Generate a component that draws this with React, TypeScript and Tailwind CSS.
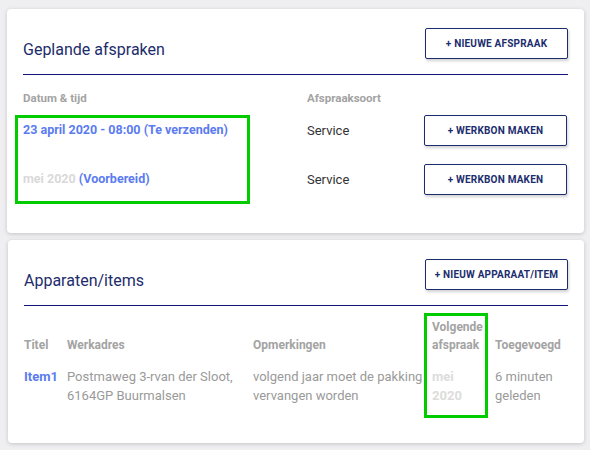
import React from 'react'

// ─── Data ─────────────────────────────────────────────────────────────────────

const APPOINTMENTS = [
  { date: '23 april 2020 - 08:00', dateMuted: false, status: '(Te verzenden)', type: 'Service' },
  { date: 'mei 2020', dateMuted: true, status: '(Voorbereid)', type: 'Service' },
]

// ─── Bits ─────────────────────────────────────────────────────────────────────

function OutlineButton({ label }: { label: string }) {
  return (
    <button className="w-[143px] h-[31px] border-[1.5px] border-[#1c2d6e] bg-white rounded-[2px] shadow-[1px_2px_3px_rgba(0,0,0,0.18)] text-[10px] font-bold tracking-[0.2px] text-[#1c2d6e] uppercase">
      {label}
    </button>
  )
}

function CardHeader({ title, action }: { title: string; action: string }) {
  return (
    <div className="flex items-end justify-between pt-[19px] pb-[15px] border-b border-[#13137a]">
      <h2 className="text-[16px] leading-[20px] text-[#1d2c6b] -mb-[1px]">{title}</h2>
      <OutlineButton label={action} />
    </div>
  )
}

// ─── App ──────────────────────────────────────────────────────────────────────

export default function App() {
  return (
    <div
      className="relative w-[590px] h-[450px] bg-[#efeef1] pt-[9px] pl-[7px]"
      style={{ fontFamily: 'Roboto, "Liberation Sans", sans-serif' }}
    >
      {/* Geplande afspraken */}
      <div className="w-[577px] h-[224px] bg-white rounded-[4px] shadow-[0_1px_4px_rgba(0,0,0,0.18)] px-4">
        <CardHeader title="Geplande afspraken" action="+ Nieuwe afspraak" />
        <div className="grid grid-cols-[284px_117px_143px] items-center">
          <div className="pt-[15px] pb-[8px] text-[11.5px] font-bold text-[#a3a3a3]">Datum &amp; tijd</div>
          <div className="pt-[15px] pb-[8px] text-[11.5px] font-bold text-[#a3a3a3]">Afspraaksoort</div>
          <div />
          {APPOINTMENTS.map((a, i) => (
            <React.Fragment key={i}>
              <div className={`text-[12.5px] font-bold ${i > 0 ? 'mt-[18px]' : ''}`}>
                <span className={a.dateMuted ? 'text-[#d9d9d9]' : 'text-[#5b7bf0]'}>{a.date}</span>{' '}
                <span className="text-[#5b7bf0]">{a.status}</span>
              </div>
              <div className={`text-[13px] text-[#333333] ${i > 0 ? 'mt-[18px]' : ''}`}>{a.type}</div>
              <div className={i > 0 ? 'mt-[18px]' : ''}>
                <OutlineButton label="+ Werkbon maken" />
              </div>
            </React.Fragment>
          ))}
        </div>
      </div>

      {/* Apparaten/items */}
      <div className="mt-[7px] ml-[1px] w-[576px] h-[203px] bg-white rounded-[4px] shadow-[0_1px_4px_rgba(0,0,0,0.18)] px-4">
        <CardHeader title="Apparaten/items" action="+ Nieuw apparaat/item" />
        <div className="grid grid-cols-[43px_186px_179px_63px_73px] items-end text-[12px] leading-[18px] font-bold text-[#a3a3a3] pt-[12px]">
          <div>Titel</div>
          <div>Werkadres</div>
          <div>Opmerkingen</div>
          <div>
            Volgende
            <br />
            afspraak
          </div>
          <div>Toegevoegd</div>
        </div>
        <div className="grid grid-cols-[43px_186px_179px_63px_73px] items-start text-[13px] leading-[19px] text-[#9a9a9a] pt-[13px]">
          <div className="font-bold text-[#5b7bf0]">Item1</div>
          <div>
            Postmaweg 3-rvan der Sloot,
            <br />
            6164GP Buurmalsen
          </div>
          <div>
            volgend jaar moet de pakking
            <br />
            vervangen worden
          </div>
          <div className="font-bold text-[#dcdcdc]">
            mei
            <br />
            2020
          </div>
          <div>
            6 minuten
            <br />
            geleden
          </div>
        </div>
      </div>

      {/* Annotation boxes */}
      <div className="absolute left-[15px] top-[115px] w-[235px] h-[89px] border-[3px] border-[#00cc00]" />
      <div className="absolute left-[424px] top-[313px] w-[64px] h-[105px] border-[3px] border-[#00cc00]" />
    </div>
  )
}
